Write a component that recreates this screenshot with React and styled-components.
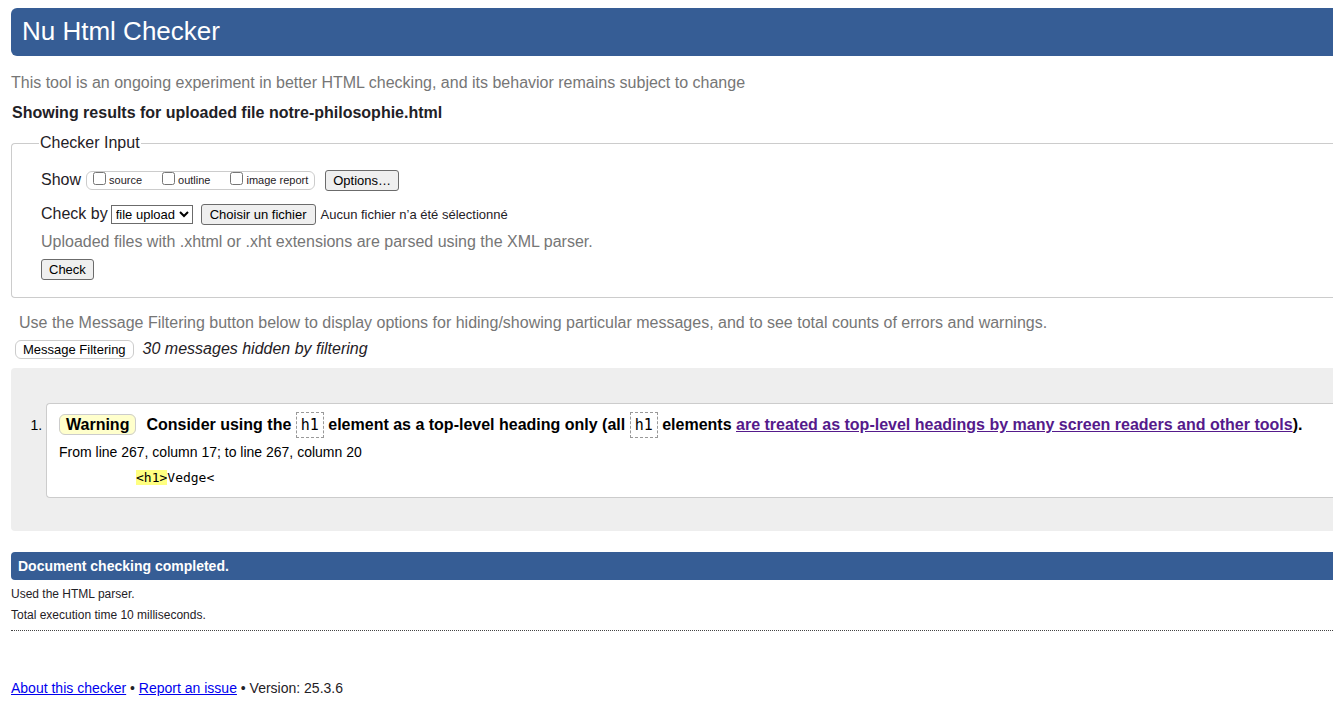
import React, { useRef, useState } from "react";
import styled, { createGlobalStyle } from "styled-components";

const GlobalStyle = createGlobalStyle`
  * { box-sizing: border-box; }
  body {
    margin: 0;
    background: #fff;
    color: #1f2126;
    font: 16px/20px "Liberation Sans", Arial, sans-serif;
  }
  a { color: #0000ee; }
`;

const Page = styled.div`
  padding: 8px 0 8px 11px;
`;

const Banner = styled.header`
  padding: 8px 11px 10px;
  border-radius: 6px 0 0 6px;
  background: #365d95;
  color: #fff;
`;

const Title = styled.h1`
  margin: 0;
  font-size: 26px;
  line-height: 30px;
  font-weight: 400;
`;

const Note = styled.p`
  margin: 0;
  color: #767676;
`;

const Intro = styled(Note)`
  margin-top: 17px;
`;

const ResultsTitle = styled.h2`
  margin: 10px 0 0;
  padding-left: 1px;
  font-size: 16px;
  line-height: 20px;
`;

const InputForm = styled.form`
  margin-top: 10px;
`;

const InputPanel = styled.fieldset`
  margin: 0;
  padding: 16px 0 17px 29px;
  border: 1px solid #ccc;
  border-right: 0;
  border-radius: 4px 0 0 4px;
`;

const Legend = styled.legend`
  margin-left: -2px;
  padding: 0 1px;
`;

const FormRow = styled.div`
  display: flex;
  align-items: center;
  min-height: ${(p) => p.$height || 20}px;
  margin-bottom: ${(p) => p.$after || 0}px;
`;

const CheckGroup = styled.div`
  display: flex;
  align-items: center;
  gap: 20px;
  height: 19px;
  margin: 0 10px 0 5px;
  padding: 0 6px;
  border: 1px solid #ccc;
  border-radius: 6px;
`;

const CheckLabel = styled.label`
  display: flex;
  align-items: center;
  gap: 3px;
  font-size: 11px;
  line-height: 14px;

  input {
    width: 13px;
    height: 13px;
    margin: 0 0 4px;
  }
`;

const Button = styled.button`
  height: 21px;
  padding: 0 ${(p) => p.$inset || 7}px;
  border: 1px solid #6b6b6b;
  border-radius: 3px;
  background: #efefef;
  color: #000;
  font: 13px/19px "Liberation Sans", Arial, sans-serif;
`;

const FilterButton = styled(Button)`
  height: 19px;
  border-color: #ccc;
  border-radius: 6px;
  background: #fff;
  line-height: 17px;
`;

const MethodSelect = styled.select`
  height: 19px;
  margin: 1px 8px 0 3px;
  padding: 0;
  border: 1px solid #6b6b6b;
  border-radius: 0;
  background: #fff;
  color: #000;
  font: 13px/17px "Liberation Sans", Arial, sans-serif;
`;

const FilePicker = styled.div`
  display: flex;
  align-items: center;
  gap: 5px;
  margin-top: 1px;
  font-size: 13px;
`;

const FilterNote = styled(Note)`
  margin-top: 15px;
  padding-left: 8px;
`;

const FilterBar = styled.div`
  display: flex;
  align-items: center;
  gap: 9px;
  margin-top: 6px;
  padding-left: 4px;
`;

const Results = styled.ol`
  margin: 9px 0 0;
  padding: 35px 0 33px 35px;
  border-radius: 4px 0 0 4px;
  background: #eee;
  color: #000;
  font-size: 14px;
`;

const Message = styled.li`
  padding: 8px 0 9px 12px;
  border: 1px solid #ccc;
  border-right: 0;
  border-radius: 4px 0 0 4px;
  background: #fff;
`;

const MessageText = styled.p`
  margin: 0;
  font-size: 16px;
  line-height: 26px;
  font-weight: 700;

  a { color: #551a8b; }
`;

const Severity = styled.strong`
  margin-right: 10px;
  padding: 1px 6px;
  border: 1px solid #ccc;
  border-radius: 6px;
  background: #ffffcc;
`;

const Code = styled.code`
  padding: 3px 4px;
  border: 1px dashed #999;
  font: 400 15px/20px "DejaVu Sans Mono", monospace;
`;

const Location = styled.p`
  margin: 4px 0 6px;
  line-height: 20px;
`;

const Extract = styled.pre`
  margin: 0;
  padding-left: 77px;
  font: 13px/20px "DejaVu Sans Mono", monospace;

  mark { background: #ffff80; color: inherit; }
`;

const Completed = styled.p`
  margin: 21px 0 0;
  padding: 4px 7px;
  border-radius: 4px 0 0 4px;
  background: #365d95;
  color: #fff;
  font-size: 14px;
  font-weight: 700;
`;

const Stats = styled.div`
  padding: 4px 0;
  border-bottom: 1px dotted #444;
  font-size: 12px;
  line-height: 21px;

  p { margin: 0; }
`;

const Footer = styled.footer`
  margin-top: 47px;
  font-size: 14px;
`;

export default function App() {
  const fileRef = useRef(null);
  const [fileName, setFileName] = useState("");

  return (
    <>
      <GlobalStyle />
      <Page>
        <Banner>
          <Title>Nu Html Checker</Title>
        </Banner>
        <main>
          <Intro>This tool is an ongoing experiment in better HTML checking, and its behavior remains subject to change</Intro>
          <ResultsTitle>Showing results for uploaded file notre-philosophie.html</ResultsTitle>

          <InputForm onSubmit={(e) => e.preventDefault()}>
            <InputPanel>
              <Legend>Checker Input</Legend>
              <FormRow $height={22} $after={12}>
                <span>Show</span>
                <CheckGroup>
                  {["source", "outline", "image report"].map((name) => (
                    <CheckLabel key={name}>
                      <input type="checkbox" />
                      {name}
                    </CheckLabel>
                  ))}
                </CheckGroup>
                <Button type="button">Options…</Button>
              </FormRow>
              <FormRow $height={22} $after={7}>
                <label htmlFor="method">Check by</label>
                <MethodSelect id="method" defaultValue="file">
                  <option value="file">file upload</option>
                </MethodSelect>
                <FilePicker>
                  <input ref={fileRef} type="file" hidden onChange={(e) => setFileName(e.target.files[0]?.name || "")} />
                  <Button type="button" $inset={8} onClick={() => fileRef.current.click()}>Choisir un fichier</Button>
                  <span>{fileName || "Aucun fichier n’a été sélectionné"}</span>
                </FilePicker>
              </FormRow>
              <FormRow $after={7}>
                <Note>Uploaded files with .xhtml or .xht extensions are parsed using the XML parser.</Note>
              </FormRow>
              <FormRow>
                <Button type="submit">Check</Button>
              </FormRow>
            </InputPanel>
          </InputForm>

          <FilterNote>Use the Message Filtering button below to display options for hiding/showing particular messages, and to see total counts of errors and warnings.</FilterNote>
          <FilterBar>
            <FilterButton type="button">Message Filtering</FilterButton>
            <em>30 messages hidden by filtering</em>
          </FilterBar>

          <Results>
            <Message>
              <MessageText>
                <Severity>Warning</Severity>
                Consider using the <Code>h1</Code> element as a top-level heading only (all <Code>h1</Code> elements{" "}
                <a href="#headings">are treated as top-level headings by many screen readers and other tools</a>).
              </MessageText>
              <Location>From line 267, column 17; to line 267, column 20</Location>
              <Extract><mark>{"<h1>"}</mark>{"Vedge<"}</Extract>
            </Message>
          </Results>

          <Completed>Document checking completed.</Completed>
          <Stats>
            <p>Used the HTML parser.</p>
            <p>Total execution time 10 milliseconds.</p>
          </Stats>
        </main>
        <Footer>
          <a href="#about">About this checker</a> • <a href="#issue">Report an issue</a> • Version: 25.3.6
        </Footer>
      </Page>
    </>
  );
}
